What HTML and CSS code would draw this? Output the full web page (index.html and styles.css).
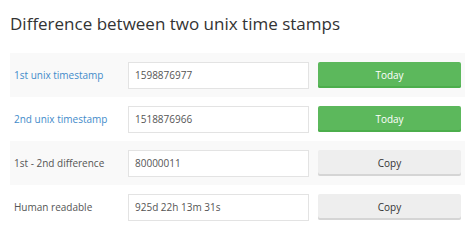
FILE: index.html
```html
<!DOCTYPE html>
<html>
<head>
<meta charset="utf-8">
<link rel="stylesheet" href="styles.css">
</head>
<body>
<div class="page">
  <h1 class="title">Difference between two unix time stamps</h1>
  <div class="table">
    <div class="row odd">
      <div class="label link">1st unix timestamp</div>
      <div class="field"><input class="input" type="text" value="1598876977"></div>
      <div class="action"><button class="btn btn-green">Today</button></div>
    </div>
    <div class="row">
      <div class="label link">2nd unix timestamp</div>
      <div class="field"><input class="input" type="text" value="1518876966"></div>
      <div class="action"><button class="btn btn-green">Today</button></div>
    </div>
    <div class="row odd">
      <div class="label">1st - 2nd difference</div>
      <div class="field"><input class="input" type="text" value="80000011"></div>
      <div class="action"><button class="btn btn-grey">Copy</button></div>
    </div>
    <div class="row">
      <div class="label">Human readable</div>
      <div class="field"><input class="input" type="text" value="925d 22h 13m 31s"></div>
      <div class="action"><button class="btn btn-grey">Copy</button></div>
    </div>
  </div>
</div>
</body>
</html>
```
FILE: styles.css
```css
html, body {
  margin: 0;
  padding: 0;
  background: #fff;
}
body {
  font-family: "Open Sans", "Liberation Sans", sans-serif;
  color: #333;
}
.page {
  padding: 0 9px 0 10px;
}
.title {
  margin: 0;
  padding-top: 12px;
  height: 53px;
  box-sizing: border-box;
  font-size: 17px;
  font-weight: 400;
  line-height: 24px;
  color: #333;
}
.table {
  display: flex;
  flex-direction: column;
}
.row {
  display: grid;
  grid-template-columns: 105px 181px 143px;
  column-gap: 9px;
  align-items: center;
  height: 44px;
  padding-left: 4px;
}
.row.odd {
  background: #f9f9f9;
}
.label {
  font-size: 10px;
  color: #555;
}
.label.link {
  color: #428bca;
}
.input {
  display: block;
  width: 100%;
  height: 27px;
  box-sizing: border-box;
  border: 1px solid #e3e3e3;
  background: #fff;
  padding: 0 6px;
  font-family: "Open Sans", "Liberation Sans", sans-serif;
  font-size: 10px;
  color: #555;
  margin: 0;
  outline: none;
}
.btn {
  display: block;
  width: 100%;
  height: 26px;
  border: none;
  border-radius: 2px;
  font-family: "Open Sans", "Liberation Sans", sans-serif;
  font-size: 10px;
  margin: 0;
  padding: 0;
}
.btn-green {
  background: #5cb85c;
  color: #fff;
  box-shadow: inset 0 -2px 0 #4cae4c;
}
.btn-grey {
  background: #eeeeee;
  color: #333;
  box-shadow: inset 0 -2px 0 #d5d5d5;
}
```
